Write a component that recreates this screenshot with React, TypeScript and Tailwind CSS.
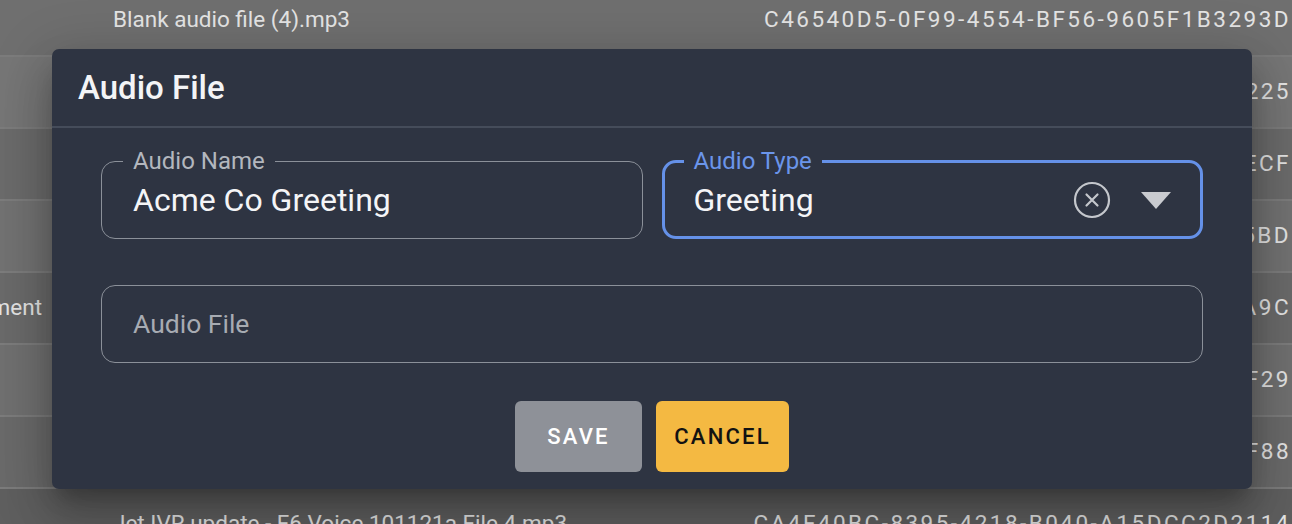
import { useState } from 'react';

const rows = [
  { lead: '', name: 'Blank audio file (4).mp3', id: 'C46540D5-0F99-4554-BF56-9605F1B3293D', bg: 'bg-[#6f6f6f]' },
  { lead: '', name: 'Main Menu Prompt.mp3', id: '8B1D27E0-3A44-4C19-9E02-6F7A1C4E8225', bg: 'bg-[#767676]' },
  { lead: '', name: 'After Hours Message.mp3', id: '2F09A6C1-77B3-41D8-A5E4-0D93B61F4ECF', bg: 'bg-[#6b6b6b]' },
  { lead: '', name: 'Holiday Closure.mp3', id: '9E4C1B72-5D60-4F2A-8C31-E27A90D465BD', bg: 'bg-[#727272]' },
  { lead: 'Hold Music Announcement', name: '', id: '51A7E3D8-06C2-4B95-B7F0-3C8D24E61A9C', bg: 'bg-[#6a6a6a]' },
  { lead: '', name: 'Queue Position Update.mp3', id: 'D3806F4A-91E5-4C7B-A2D6-B54F180E3F29', bg: 'bg-[#707070]' },
  { lead: '', name: 'Voicemail Greeting.mp3', id: '7C25B9E1-4A08-4D63-9F17-A06E3BC25F88', bg: 'bg-[#6a6a6a]' },
  { lead: '', name: 'Jet IVR update - F6 Voice 101121a File 4.mp3', id: 'CA4F40BC-8395-4218-B040-A15DCC2D2114', bg: 'bg-[#5f5f5f]' },
];

function BackgroundTable() {
  return (
    <div className="flex flex-col -mt-[15px]">
      {rows.map((r, i) => (
        <div key={i} className={`h-[72px] shrink-0 flex items-center border-b-2 border-[#7c7c7c] text-[22.5px] text-[#e4e4e4] whitespace-nowrap ${r.bg}`}>
          <div className="w-[42px] shrink-0 overflow-hidden flex justify-end">
            <span>{r.lead}</span>
          </div>
          <span className="ml-[71px]">{r.name}</span>
          <span className="ml-auto pr-[1px] tracking-[0.11em]">{r.id}</span>
        </div>
      ))}
    </div>
  );
}

function OutlinedField({ label, value, focused, children }: { label: string; value: string; focused?: boolean; children?: React.ReactNode }) {
  return (
    <fieldset
      className={`min-w-0 rounded-[14px] ${
        focused ? 'border-[3px] border-[#6591e8] pl-[19px] pr-[29px] pb-[17px]' : 'border-[1.5px] border-[#8b9099] pl-[21px] pr-[24px] pb-[18.5px]'
      }`}
    >
      <legend className={`text-[24px] leading-[24px] px-[10px] ${focused ? 'text-[#6b95ea]' : 'text-[#b3b7be]'}`}>{label}</legend>
      <div className="flex items-center h-[38px] mt-[8px] pl-[10px]">
        <span className="flex-1 text-[32px] leading-[38px] text-[#f4f5f7]">{value}</span>
        {children}
      </div>
    </fieldset>
  );
}

export default function App() {
  const [name] = useState('Acme Co Greeting');

  return (
    <div className="relative w-[1292px] h-[524px] overflow-hidden bg-[#6e6e6e] font-['Roboto',sans-serif]">
      <BackgroundTable />

      <div className="absolute left-[52px] top-[49px] w-[1200px] h-[440px] rounded-[7px] bg-[#2e3442] flex flex-col shadow-[0_14px_20px_-8px_rgba(0,0,0,0.25),0_30px_46px_4px_rgba(0,0,0,0.16),0_12px_56px_10px_rgba(0,0,0,0.14)]">
        <div className="h-[79px] shrink-0 flex items-center px-[26px] border-b-2 border-[#454c5a]">
          <h2 className="text-[33px] leading-[40px] font-medium text-[#f3f4f6] pt-[1px]">Audio File</h2>
        </div>

        <div className="flex flex-col px-[49px] pt-[21px]">
          <div className="grid grid-cols-2 gap-[19px]">
            <OutlinedField label="Audio Name" value={name} />
            <OutlinedField label="Audio Type" value="Greeting" focused>
              <div className="flex items-center gap-[30px]">
                <svg width="38" height="38" viewBox="0 0 38 38" fill="none" stroke="#c4c7cc" strokeWidth="2.2" strokeLinecap="round">
                  <circle cx="19" cy="19" r="17" />
                  <path d="M13.5 13.5 L24.5 24.5 M24.5 13.5 L13.5 24.5" />
                </svg>
                <svg width="30" height="17" viewBox="0 0 30 17">
                  <path d="M0 0 H30 L15 17 Z" fill="#c9cbd0" />
                </svg>
              </div>
            </OutlinedField>
          </div>

          <div className="mt-[46px] h-[78px] rounded-[14px] border-[1.5px] border-[#8b9099] flex items-center pl-[31px]">
            <span className="text-[26.5px] text-[#a7abb2]">Audio File</span>
          </div>

          <div className="mt-[38px] flex justify-center gap-[14px]">
            <button className="w-[127px] h-[71px] rounded-[6px] bg-[#8e9198] text-white text-[22px] font-medium tracking-[0.1em]">
              SAVE
            </button>
            <button className="w-[133px] h-[71px] rounded-[6px] bg-[#f4b942] text-[#121212] text-[22px] font-medium tracking-[0.1em]">
              CANCEL
            </button>
          </div>
        </div>
      </div>
    </div>
  );
}
